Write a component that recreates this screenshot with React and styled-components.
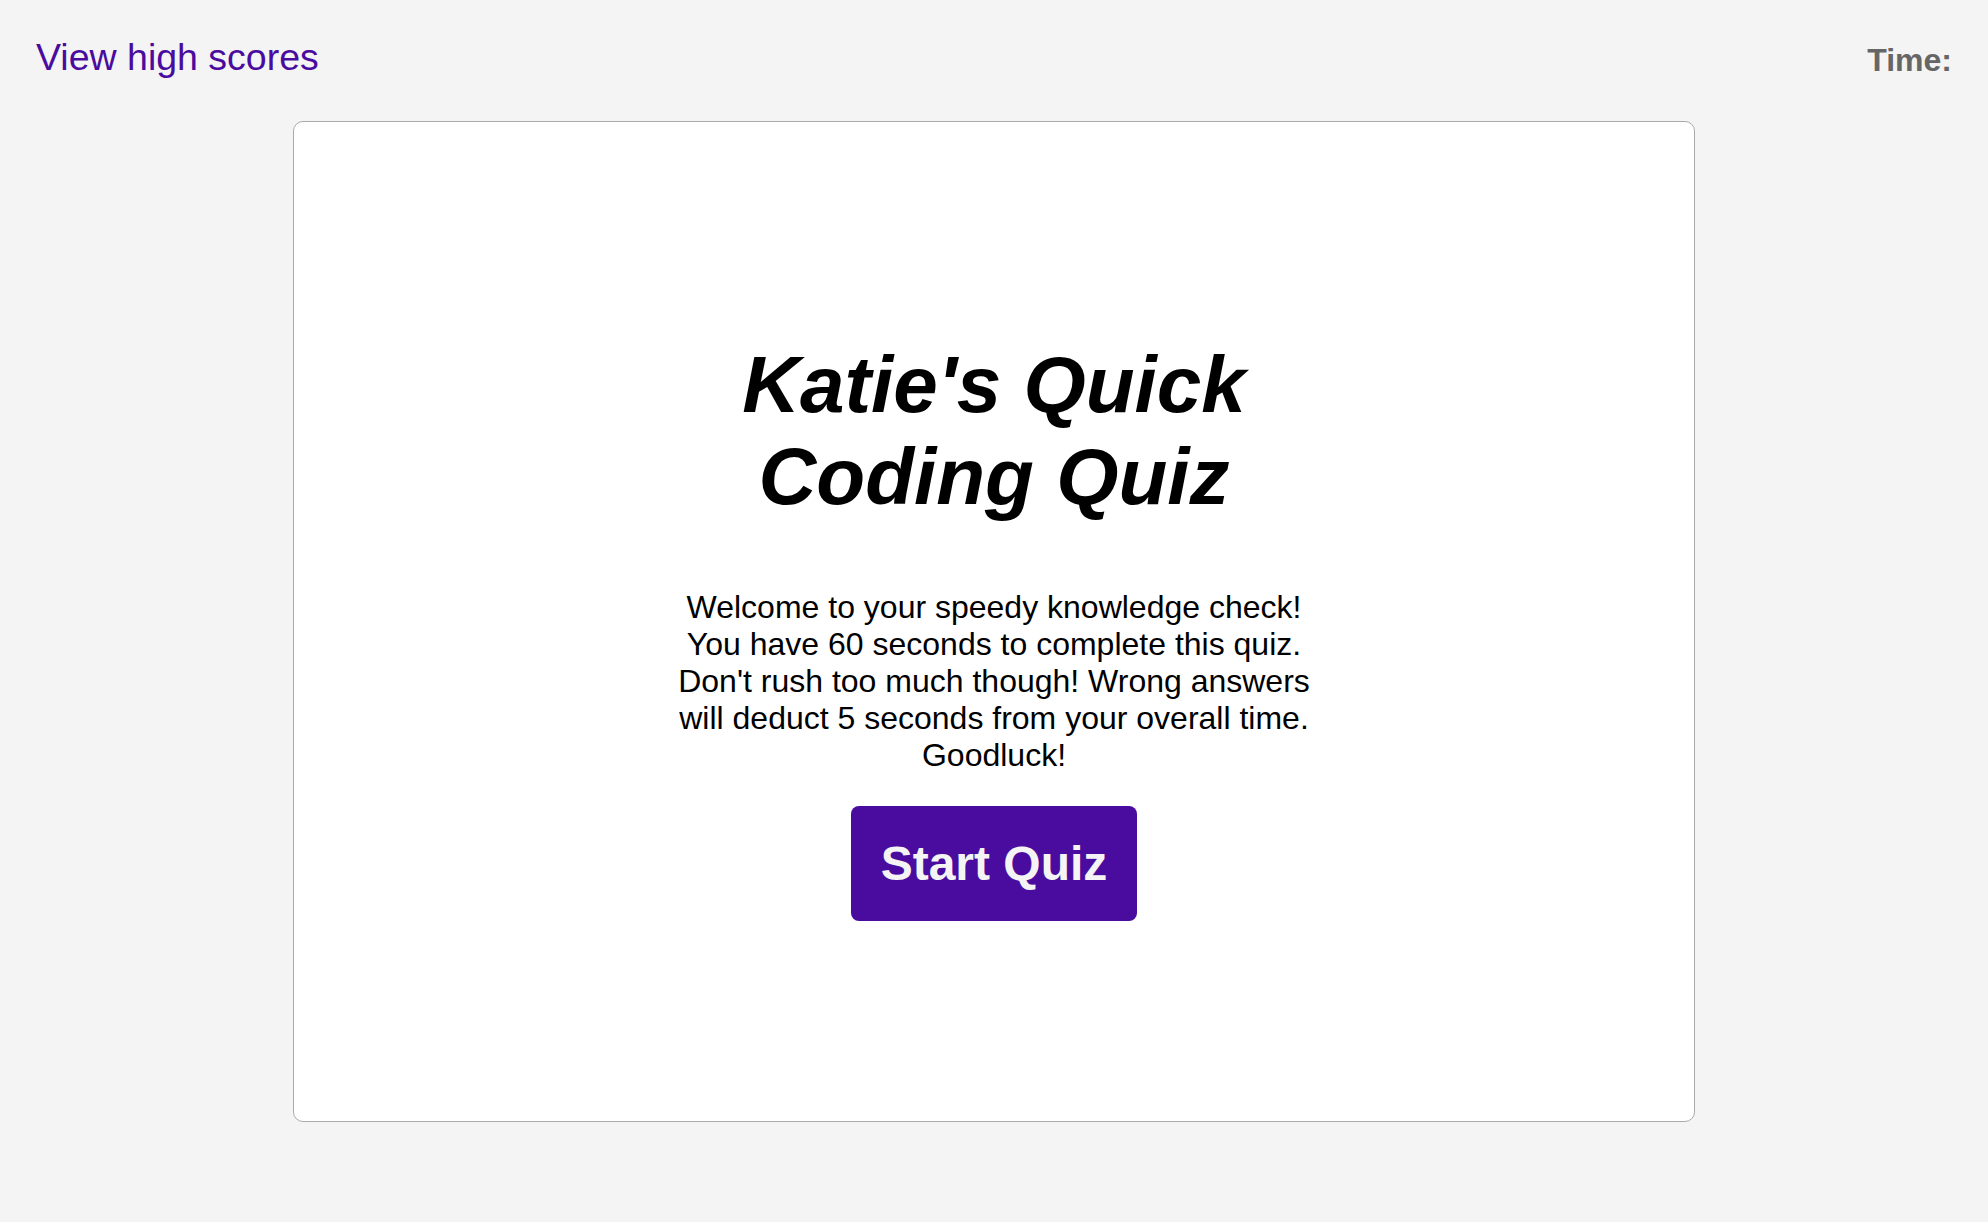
import React from "react";
import styled, { createGlobalStyle } from "styled-components";

const GlobalStyle = createGlobalStyle`
  * {
    box-sizing: border-box;
  }
  body {
    margin: 0;
    background-color: #f4f4f4;
    font-family: "Liberation Sans", Arial, Helvetica, sans-serif;
  }
`;

const App = () => {
  return (
    <>
      <GlobalStyle />
      <Header>
        <HighScores href="#">View high scores</HighScores>
        <Timer>Time:</Timer>
      </Header>
      <Card>
        <Content>
          <Title>Katie's Quick Coding Quiz</Title>
          <Intro>
            Welcome to your speedy knowledge check! You have 60 seconds to
            complete this quiz. Don't rush too much though! Wrong answers will
            deduct 5 seconds from your overall time. Goodluck!
          </Intro>
          <StartButton>Start Quiz</StartButton>
        </Content>
      </Card>
    </>
  );
};

const Header = styled.header`
  display: flex;
  justify-content: space-between;
  align-items: baseline;
  height: 79px;
  padding: 36px 36px 0 36px;
`;

const HighScores = styled.a`
  font-size: 37.5px;
  color: #4a0c9e;
  text-decoration: none;
`;

const Timer = styled.span`
  font-size: 32px;
  font-weight: bold;
  color: #666666;
  transform: translateY(1px);
`;

const Card = styled.main`
  width: 1402px;
  margin: 42px auto 0;
  padding: 217px 0 200px;
  background-color: #ffffff;
  border: 1px solid #aaaaaa;
  border-radius: 10px;
`;

const Content = styled.div`
  width: 650px;
  margin: 0 auto;
  display: flex;
  flex-direction: column;
  align-items: center;
  text-align: center;
`;

const Title = styled.h1`
  margin: 0 0 66px;
  font-size: 80px;
  font-style: italic;
  font-weight: bold;
  color: #000000;
`;

const Intro = styled.p`
  margin: 0 0 32px;
  font-size: 32px;
  color: #000000;
`;

const StartButton = styled.button`
  font-family: inherit;
  font-size: 48px;
  font-weight: bold;
  color: #f4f4f4;
  background-color: #4a0c9e;
  border: none;
  border-radius: 8px;
  padding: 30px 30px;
  cursor: pointer;
`;

export default App;
